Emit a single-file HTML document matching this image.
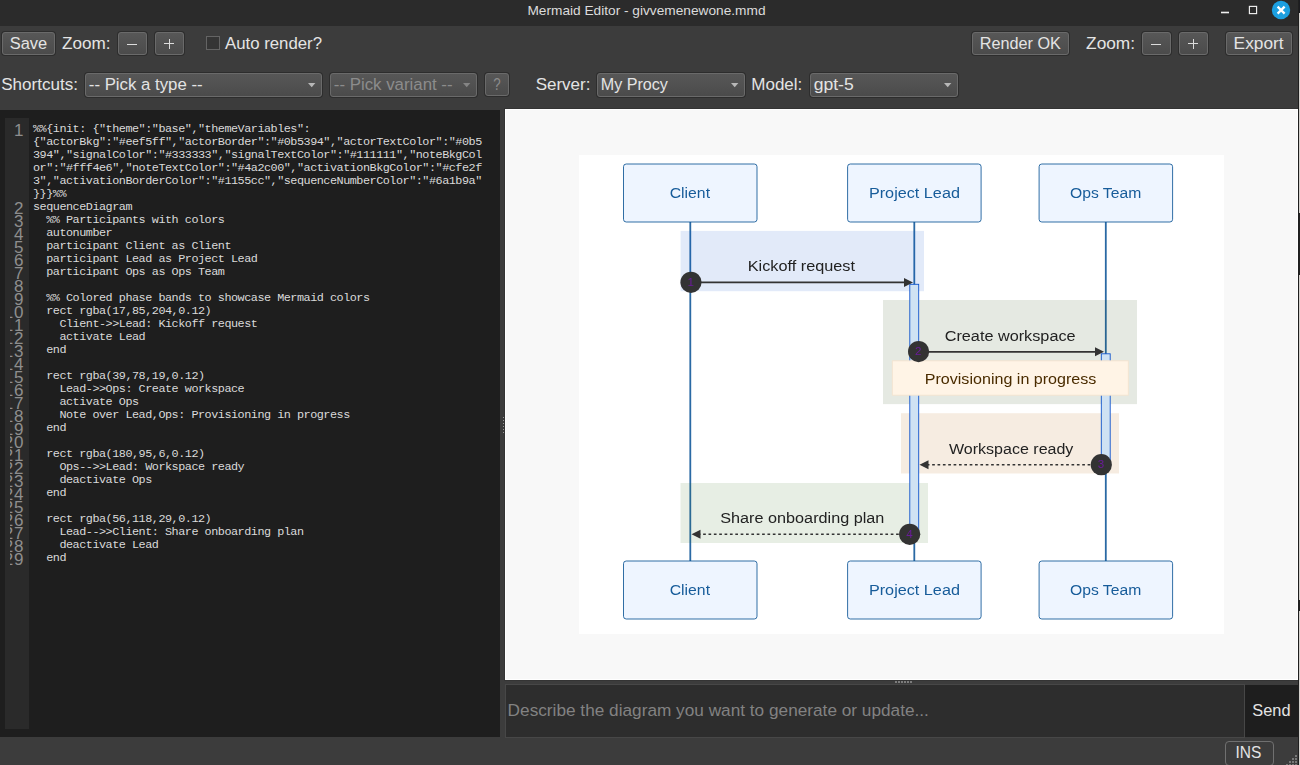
<!DOCTYPE html>
<html><head><meta charset="utf-8"><title>Mermaid Editor</title><style>
html,body{margin:0;padding:0}
body{width:1300px;height:765px;overflow:hidden;background:#3c3c3c;position:relative;font-family:"Liberation Sans",sans-serif}
.a,.btn,.editor,.preview,.canvas{position:absolute}
div.a{box-sizing:border-box}
.btn{border:1px solid #6a6a6a;border-radius:3px;background:linear-gradient(#575757,#4b4b4b);box-shadow:0 0 0 1px #2d2d2d}
.editor{left:0;top:110px;width:500px;height:627px;background:#1e1e1e;overflow:hidden}
.gutter{position:absolute;left:5px;top:8px;width:24px;height:611px;background:#2a2a2a}
.code{position:absolute;left:33px;top:13px;margin:0;font-family:"Liberation Mono",monospace;font-size:11.8px;line-height:13px;letter-spacing:-0.48px;color:#dadada;white-space:pre}
.preview{left:505px;top:109px;width:791px;height:569px;border:1px solid #fff;background:#f8f8f8}
.canvas{left:579px;top:155px;width:645px;height:478.5px;background:#fff}
</style></head><body>
<div class="a" style="left:0px;top:0px;width:1298px;height:26px;background:#2b2b2b"></div>
<svg class="a" style="left:1210px;top:0" width="88" height="26" viewBox="1210 0 88 26">
<rect x="1221" y="11.7" width="8" height="1.6" fill="#f0f0f0"/>
<rect x="1249.4" y="6.4" width="7.2" height="7.2" fill="none" stroke="#f0f0f0" stroke-width="1.15"/>
<circle cx="1281" cy="10" r="9.2" fill="#1c9fe0"/>
<path d="M1277.6 6.6 L1284.6 13.6 M1284.6 6.6 L1277.6 13.6" stroke="#fff" stroke-width="2.3" stroke-linecap="butt"/>
</svg>
<div class="btn" style="left:2px;top:32px;width:51px;height:21px"></div>
<div class="btn" style="left:118px;top:32px;width:27px;height:21px"></div>
<div class="a" style="left:127.3px;top:44px;width:10px;height:1px;background:#dcdcdc"></div>
<div class="btn" style="left:155px;top:32px;width:27px;height:21px"></div>
<div class="a" style="left:164.3px;top:43.2px;width:10px;height:1.1px;background:#dcdcdc"></div>
<div class="a" style="left:168.6px;top:39px;width:1.2px;height:10px;background:#dcdcdc"></div>
<div class="a" style="left:206px;top:36px;width:14px;height:14px;border:1px solid #646464;background:#353535"></div>
<div class="btn" style="left:972px;top:32px;width:95px;height:21px"></div>
<div class="btn" style="left:1142px;top:32px;width:27px;height:21px"></div>
<div class="a" style="left:1151.3px;top:44px;width:10px;height:1px;background:#dcdcdc"></div>
<div class="btn" style="left:1179px;top:32px;width:27px;height:21px"></div>
<div class="a" style="left:1188.3px;top:43.2px;width:10px;height:1.1px;background:#dcdcdc"></div>
<div class="a" style="left:1192.6px;top:39px;width:1.2px;height:10px;background:#dcdcdc"></div>
<div class="btn" style="left:1226px;top:32px;width:64px;height:21px"></div>
<div class="btn" style="left:85px;top:73px;width:235px;height:22px"></div>
<svg class="a" style="left:307.8px;top:83px" width="8" height="5"><path d="M0 0H7.4L3.7 4.3Z" fill="#b8b8b8"/></svg>
<div class="btn" style="left:330px;top:73px;width:145px;height:22px"></div>
<svg class="a" style="left:462.8px;top:83px" width="8" height="5"><path d="M0 0H7.4L3.7 4.3Z" fill="#858585"/></svg>
<div class="btn" style="left:485px;top:73px;width:22px;height:21px"></div>
<div class="btn" style="left:597px;top:73px;width:146px;height:22px"></div>
<svg class="a" style="left:730.8px;top:83px" width="8" height="5"><path d="M0 0H7.4L3.7 4.3Z" fill="#b8b8b8"/></svg>
<div class="btn" style="left:810px;top:73px;width:146px;height:22px"></div>
<svg class="a" style="left:943.8px;top:83px" width="8" height="5"><path d="M0 0H7.4L3.7 4.3Z" fill="#b8b8b8"/></svg>
<div class="editor">
<div class="gutter"></div>
<pre class="code">%%{init: {&quot;theme&quot;:&quot;base&quot;,&quot;themeVariables&quot;:
{&quot;actorBkg&quot;:&quot;#eef5ff&quot;,&quot;actorBorder&quot;:&quot;#0b5394&quot;,&quot;actorTextColor&quot;:&quot;#0b5
394&quot;,&quot;signalColor&quot;:&quot;#333333&quot;,&quot;signalTextColor&quot;:&quot;#111111&quot;,&quot;noteBkgCol
or&quot;:&quot;#fff4e6&quot;,&quot;noteTextColor&quot;:&quot;#4a2c00&quot;,&quot;activationBkgColor&quot;:&quot;#cfe2f
3&quot;,&quot;activationBorderColor&quot;:&quot;#1155cc&quot;,&quot;sequenceNumberColor&quot;:&quot;#6a1b9a&quot;
}}}%%
sequenceDiagram
  %% Participants with colors
  autonumber
  participant Client as Client
  participant Lead as Project Lead
  participant Ops as Ops Team

  %% Colored phase bands to showcase Mermaid colors
  rect rgba(17,85,204,0.12)
    Client-&gt;&gt;Lead: Kickoff request
    activate Lead
  end

  rect rgba(39,78,19,0.12)
    Lead-&gt;&gt;Ops: Create workspace
    activate Ops
    Note over Lead,Ops: Provisioning in progress
  end

  rect rgba(180,95,6,0.12)
    Ops--&gt;&gt;Lead: Workspace ready
    deactivate Ops
  end

  rect rgba(56,118,29,0.12)
    Lead--&gt;&gt;Client: Share onboarding plan
    deactivate Lead
  end</pre>
</div>
<svg class="a" style="left:10px;top:118px;overflow:hidden" width="19" height="611" viewBox="10 118 19 611" font-family="'Liberation Sans',sans-serif" font-size="17" fill="#8e8e8e"><text x="23.50" y="136" text-anchor="end">1</text><text x="23.50" y="214" text-anchor="end">2</text><text x="23.50" y="227" text-anchor="end">3</text><text x="23.50" y="240" text-anchor="end">4</text><text x="23.50" y="253" text-anchor="end">5</text><text x="23.50" y="266" text-anchor="end">6</text><text x="23.50" y="279" text-anchor="end">7</text><text x="23.50" y="292" text-anchor="end">8</text><text x="23.50" y="305" text-anchor="end">9</text><text x="23.50" y="318" text-anchor="end">0</text><text x="13.32" y="318" text-anchor="end">1</text><text x="23.50" y="331" text-anchor="end">1</text><text x="13.32" y="331" text-anchor="end">1</text><text x="23.50" y="344" text-anchor="end">2</text><text x="13.32" y="344" text-anchor="end">1</text><text x="23.50" y="357" text-anchor="end">3</text><text x="13.32" y="357" text-anchor="end">1</text><text x="23.50" y="370" text-anchor="end">4</text><text x="13.32" y="370" text-anchor="end">1</text><text x="23.50" y="383" text-anchor="end">5</text><text x="13.32" y="383" text-anchor="end">1</text><text x="23.50" y="396" text-anchor="end">6</text><text x="13.32" y="396" text-anchor="end">1</text><text x="23.50" y="409" text-anchor="end">7</text><text x="13.32" y="409" text-anchor="end">1</text><text x="23.50" y="422" text-anchor="end">8</text><text x="13.32" y="422" text-anchor="end">1</text><text x="23.50" y="435" text-anchor="end">9</text><text x="13.32" y="435" text-anchor="end">1</text><text x="23.50" y="448" text-anchor="end">0</text><text x="13.32" y="448" text-anchor="end">2</text><text x="23.50" y="461" text-anchor="end">1</text><text x="13.32" y="461" text-anchor="end">2</text><text x="23.50" y="474" text-anchor="end">2</text><text x="13.32" y="474" text-anchor="end">2</text><text x="23.50" y="487" text-anchor="end">3</text><text x="13.32" y="487" text-anchor="end">2</text><text x="23.50" y="500" text-anchor="end">4</text><text x="13.32" y="500" text-anchor="end">2</text><text x="23.50" y="513" text-anchor="end">5</text><text x="13.32" y="513" text-anchor="end">2</text><text x="23.50" y="526" text-anchor="end">6</text><text x="13.32" y="526" text-anchor="end">2</text><text x="23.50" y="539" text-anchor="end">7</text><text x="13.32" y="539" text-anchor="end">2</text><text x="23.50" y="552" text-anchor="end">8</text><text x="13.32" y="552" text-anchor="end">2</text><text x="23.50" y="565" text-anchor="end">9</text><text x="13.32" y="565" text-anchor="end">2</text></svg>
<div class="a" style="left:503px;top:417px;width:2px;height:1px;background:#9a9a9a"></div>
<div class="a" style="left:503px;top:420px;width:2px;height:1px;background:#9a9a9a"></div>
<div class="a" style="left:503px;top:423px;width:2px;height:1px;background:#9a9a9a"></div>
<div class="a" style="left:503px;top:426px;width:2px;height:1px;background:#9a9a9a"></div>
<div class="a" style="left:503px;top:429px;width:2px;height:1px;background:#9a9a9a"></div>
<div class="a" style="left:503px;top:432px;width:2px;height:1px;background:#9a9a9a"></div>
<div class="a" style="left:895px;top:681px;width:2px;height:2px;background:#7c7c7c"></div>
<div class="a" style="left:898px;top:681px;width:2px;height:2px;background:#7c7c7c"></div>
<div class="a" style="left:901px;top:681px;width:2px;height:2px;background:#7c7c7c"></div>
<div class="a" style="left:904px;top:681px;width:2px;height:2px;background:#7c7c7c"></div>
<div class="a" style="left:907px;top:681px;width:2px;height:2px;background:#7c7c7c"></div>
<div class="a" style="left:910px;top:681px;width:2px;height:2px;background:#7c7c7c"></div>
<div class="a" style="left:504px;top:108px;width:794px;height:573px;border:1px solid #343434"></div>
<div class="preview"></div>
<div class="canvas"></div>

<div class="a" style="left:505px;top:684px;width:740px;height:54px;border:1px solid #474747;background:#2d2d2d"></div>
<div class="a" style="left:1245px;top:685px;width:53px;height:52px;background:#1e1e1e"></div>
<div class="a" style="left:1225px;top:741px;width:49px;height:25px;border:1px solid #707070;border-radius:4px"></div>
<svg class="a" style="left:0;top:0" width="1300" height="765"><rect x="1295" y="764" width="2" height="2" fill="#777"/><rect x="1295" y="761" width="2" height="2" fill="#777"/><rect x="1292" y="764" width="2" height="2" fill="#777"/><rect x="1295" y="758" width="2" height="2" fill="#777"/><rect x="1292" y="761" width="2" height="2" fill="#777"/><rect x="1289" y="764" width="2" height="2" fill="#777"/><rect x="1295" y="755" width="2" height="2" fill="#777"/><rect x="1292" y="758" width="2" height="2" fill="#777"/><rect x="1289" y="761" width="2" height="2" fill="#777"/><rect x="1286" y="764" width="2" height="2" fill="#777"/></svg>
<div class="a" style="left:1298px;top:0px;width:1px;height:765px;background:#1f1f1f"></div>
<div class="a" style="left:1299px;top:0px;width:1px;height:13px;background:#1c1c20"></div>
<div class="a" style="left:1299px;top:13px;width:1px;height:752px;background:#d4d1cd"></div>
<div class="a" style="left:1299px;top:213px;width:1px;height:62px;background:#222"></div>
<div class="a" style="left:1299px;top:600px;width:1px;height:11px;background:#222"></div>
<svg class="a" style="left:0;top:0" width="1300" height="765" font-family="'Liberation Sans',sans-serif"><text transform="translate(527.40,15) scale(1.0385,1)" font-size="13.2" fill="#dcdcdc">Mermaid Editor - givvemenewone.mmd</text>
<text transform="translate(9.76,49) scale(0.9670,1)" font-size="17" fill="#e4e4e4">Save</text>
<text transform="translate(61.99,49) scale(1.0084,1)" font-size="17" fill="#e4e4e4">Zoom:</text>
<text transform="translate(225.00,49) scale(0.9881,1)" font-size="17" fill="#e4e4e4">Auto render?</text>
<text transform="translate(979.70,49) scale(0.9543,1)" font-size="17" fill="#e4e4e4">Render OK</text>
<text transform="translate(1086.08,49) scale(1.0171,1)" font-size="17" fill="#e4e4e4">Zoom:</text>
<text transform="translate(1233.62,49) scale(1.0171,1)" font-size="17" fill="#e4e4e4">Export</text>
<text transform="translate(1.23,90) scale(1.0034,1)" font-size="17" fill="#e4e4e4">Shortcuts:</text>
<text transform="translate(88.79,90) scale(0.9888,1)" font-size="17" fill="#e4e4e4">-- Pick a type --</text>
<text transform="translate(333.78,90) scale(0.9916,1)" font-size="17" fill="#8c8c8c">-- Pick variant --</text>
<text transform="translate(493.27,90) scale(0.7843,1)" font-size="17" fill="#8c8c8c">?</text>
<text transform="translate(535.63,90) scale(1.0002,1)" font-size="17" fill="#e4e4e4">Server:</text>
<text transform="translate(600.71,90) scale(0.9498,1)" font-size="17" fill="#e4e4e4">My Procy</text>
<text transform="translate(751.24,90) scale(1.0019,1)" font-size="17" fill="#e4e4e4">Model:</text>
<text transform="translate(813.70,90) scale(1.0333,1)" font-size="17" fill="#e4e4e4">gpt-5</text>
<text transform="translate(507.62,716) scale(1.0135,1)" font-size="17" fill="#828282">Describe the diagram you want to generate or update...</text>
<text transform="translate(1252.26,716) scale(0.9639,1)" font-size="17" fill="#e4e4e4">Send</text>
<text transform="translate(1235.40,758) scale(0.9135,1)" font-size="17" fill="#e4e4e4">INS</text></svg>
<svg class="a" style="left:0;top:0;will-change:transform" width="1300" height="765" font-family="'Liberation Sans',sans-serif"><line x1="690.3" y1="222" x2="690.3" y2="561" stroke="#2a69a4" stroke-width="1.8"/>
<line x1="914.3" y1="222" x2="914.3" y2="561" stroke="#2a69a4" stroke-width="1.8"/>
<line x1="1105.8" y1="222" x2="1105.8" y2="561" stroke="#2a69a4" stroke-width="1.8"/>
<rect x="680.6" y="230.9" width="243.4" height="60.3" fill="rgba(17,85,204,0.12)"/>
<rect x="883" y="300" width="254" height="104.1" fill="rgba(39,78,19,0.12)"/>
<rect x="901" y="413.2" width="218" height="60.3" fill="rgba(180,95,6,0.12)"/>
<rect x="680.5" y="483" width="247.5" height="60" fill="rgba(56,118,29,0.12)"/>
<rect x="909.8" y="284.3" width="8.9" height="250" fill="#cfe2f3" stroke="#1155cc" stroke-width="0.9"/>
<rect x="1101.3" y="353.8" width="8.9" height="111" fill="#cfe2f3" stroke="#1155cc" stroke-width="0.9"/>
<rect x="892.3" y="360.8" width="236" height="34.4" fill="#fff4e6" stroke="#f3e3cf" stroke-width="0.9"/>
<text transform="translate(924.71,384) scale(1.0735,1)" font-size="15" fill="#4a2c00">Provisioning in progress</text>
<text transform="translate(747.70,271) scale(1.0855,1)" font-size="15" fill="#222">Kickoff request</text>
<line x1="690.3" y1="282.4" x2="909" y2="282.4" stroke="#333" stroke-width="1.65"/>
<path d="M904 277.9L913 282.4L904 286.9Z" fill="#333"/>
<circle cx="691" cy="282.3" r="10.6" fill="#333"/>
<text x="690.7" y="286.0" text-anchor="middle" font-size="11.6" fill="#6a1b9a">1</text>
<text transform="translate(944.69,341) scale(1.0839,1)" font-size="15" fill="#222">Create workspace</text>
<line x1="919" y1="351.8" x2="1100" y2="351.8" stroke="#333" stroke-width="1.65"/>
<path d="M1095 347.3L1104 351.8L1095 356.3Z" fill="#333"/>
<circle cx="918.6" cy="351.6" r="10.6" fill="#333"/>
<text x="918.3000000000001" y="355.3" text-anchor="middle" font-size="11.6" fill="#6a1b9a">2</text>
<text transform="translate(948.96,454) scale(1.0696,1)" font-size="15" fill="#222">Workspace ready</text>
<line x1="1101" y1="464.8" x2="923.5" y2="464.8" stroke="#333" stroke-width="1.6" stroke-dasharray="2.68 2.68"/>
<path d="M928.5 460.3L919.5 464.8L928.5 469.3Z" fill="#333"/>
<circle cx="1101.3" cy="464.7" r="10.6" fill="#333"/>
<text x="1101.0" y="468.4" text-anchor="middle" font-size="11.6" fill="#6a1b9a">3</text>
<text transform="translate(720.27,523) scale(1.0823,1)" font-size="15" fill="#222">Share onboarding plan</text>
<line x1="909.5" y1="534.2" x2="695.5" y2="534.2" stroke="#333" stroke-width="1.6" stroke-dasharray="2.68 2.68"/>
<path d="M700.5 529.7L691.5 534.2L700.5 538.7Z" fill="#333"/>
<circle cx="909.7" cy="534.3" r="10.6" fill="#333"/>
<text x="909.4000000000001" y="538.0" text-anchor="middle" font-size="11.6" fill="#6a1b9a">4</text>
<rect x="623.5" y="164" width="133.5" height="58.0" rx="2.7" fill="#eef5ff" stroke="#0b5394" stroke-width="0.84"/>
<text transform="translate(669.71,198) scale(1.0523,1)" font-size="15" fill="#175c9a">Client</text>
<rect x="847.6" y="164" width="133.5" height="58.0" rx="2.7" fill="#eef5ff" stroke="#0b5394" stroke-width="0.84"/>
<text transform="translate(868.90,198) scale(1.0818,1)" font-size="15" fill="#175c9a">Project Lead</text>
<rect x="1039.1" y="164" width="133.5" height="58.0" rx="2.7" fill="#eef5ff" stroke="#0b5394" stroke-width="0.84"/>
<text transform="translate(1069.99,198) scale(1.0465,1)" font-size="15" fill="#175c9a">Ops Team</text>
<rect x="623.5" y="561" width="133.5" height="58.0" rx="2.7" fill="#eef5ff" stroke="#0b5394" stroke-width="0.84"/>
<text transform="translate(669.71,595) scale(1.0523,1)" font-size="15" fill="#175c9a">Client</text>
<rect x="847.6" y="561" width="133.5" height="58.0" rx="2.7" fill="#eef5ff" stroke="#0b5394" stroke-width="0.84"/>
<text transform="translate(868.90,595) scale(1.0818,1)" font-size="15" fill="#175c9a">Project Lead</text>
<rect x="1039.1" y="561" width="133.5" height="58.0" rx="2.7" fill="#eef5ff" stroke="#0b5394" stroke-width="0.84"/>
<text transform="translate(1069.99,595) scale(1.0465,1)" font-size="15" fill="#175c9a">Ops Team</text></svg>
</body></html>
